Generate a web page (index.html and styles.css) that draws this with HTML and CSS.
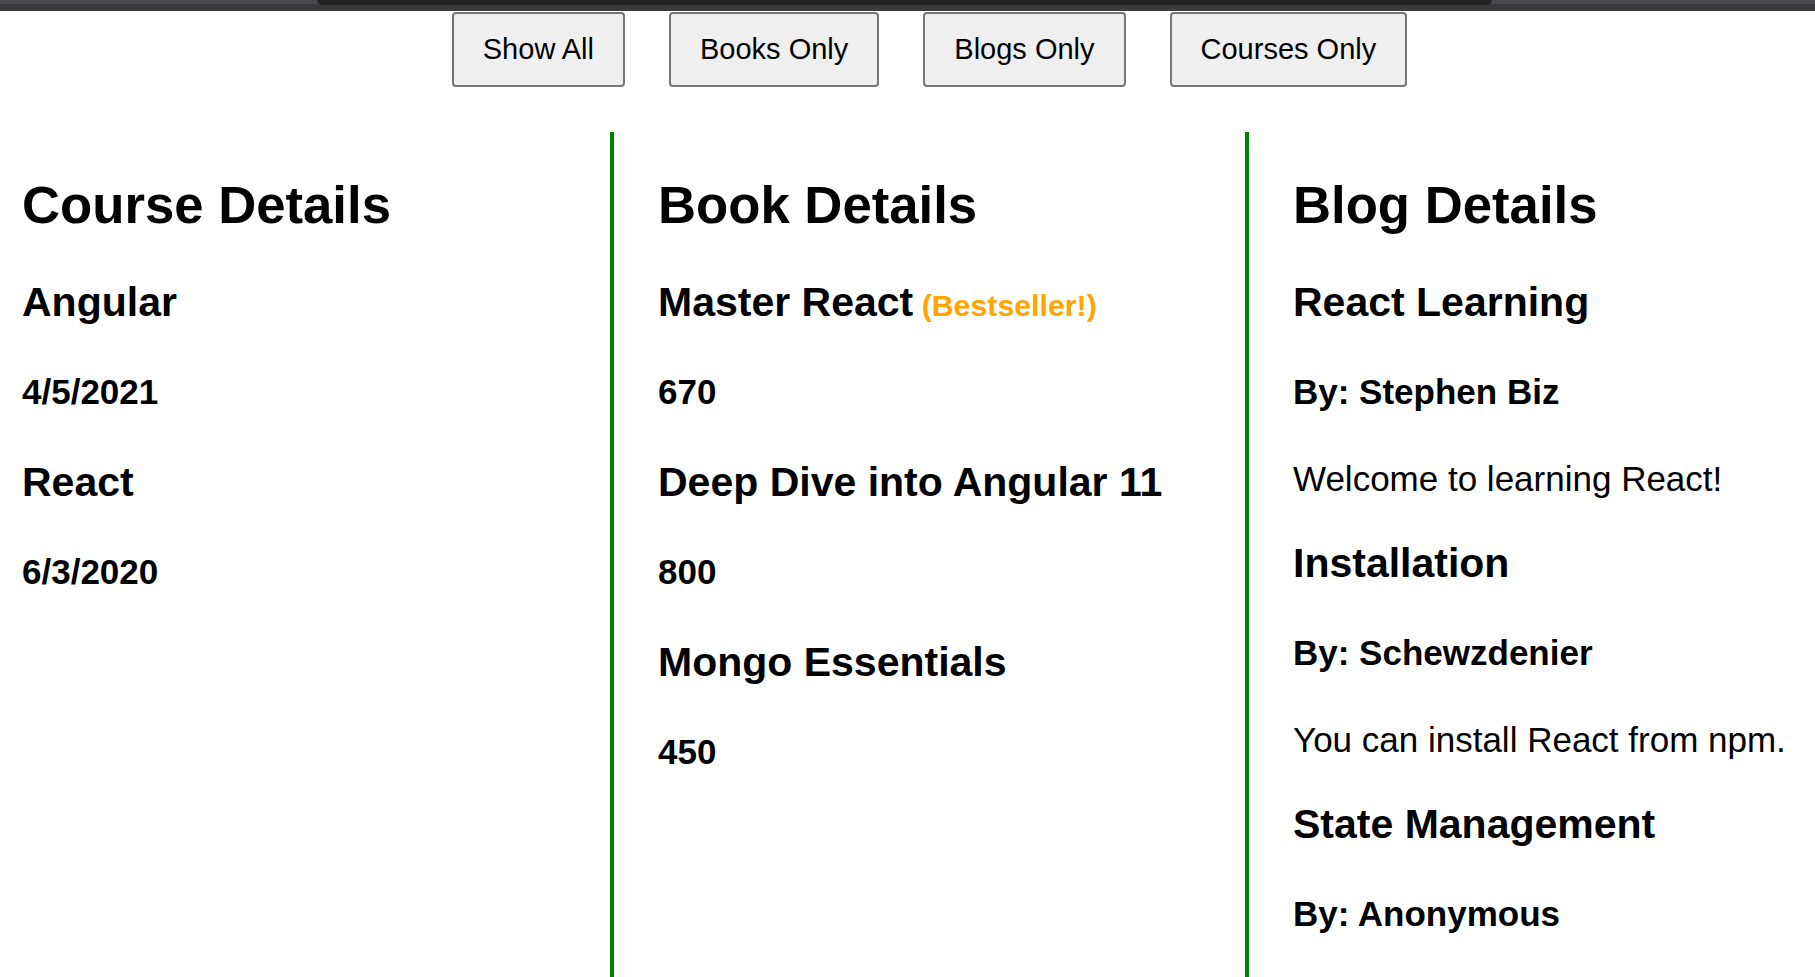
FILE: index.html
```html
<!DOCTYPE html>
<html lang="en">
<head>
<meta charset="utf-8">
<title>Details</title>
<link rel="stylesheet" href="styles.css">
</head>
<body>
<div class="topbar"><div class="topbar-tab"></div></div>
<div class="filters">
  <button class="btn">Show All</button>
  <button class="btn">Books Only</button>
  <button class="btn">Blogs Only</button>
  <button class="btn">Courses Only</button>
</div>
<div class="columns">
  <section class="col col-first">
    <h1>Course Details</h1>
    <h2>Angular</h2>
    <h3>4/5/2021</h3>
    <h2>React</h2>
    <h3>6/3/2020</h3>
  </section>
  <section class="col col-mid">
    <h1>Book Details</h1>
    <h2>Master React<span class="badge"> (Bestseller!)</span></h2>
    <h3>670</h3>
    <h2>Deep Dive into Angular 11</h2>
    <h3>800</h3>
    <h2>Mongo Essentials</h2>
    <h3>450</h3>
  </section>
  <section class="col col-last">
    <h1>Blog Details</h1>
    <h2>React Learning</h2>
    <h3>By: Stephen Biz</h3>
    <p>Welcome to learning React!</p>
    <h2>Installation</h2>
    <h3>By: Schewzdenier</h3>
    <p>You can install React from npm.</p>
    <h2>State Management</h2>
    <h3>By: Anonymous</h3>
  </section>
</div>
</body>
</html>
```
FILE: styles.css
```css
html, body {
  margin: 0;
  padding: 0;
  background: #ffffff;
  overflow: hidden;
}
body {
  font-family: Arial, "Liberation Sans", sans-serif;
  color: #000;
}
.topbar {
  height: 11px;
  background: linear-gradient(#4b4b4f 0, #4b4b4f 4px, #3a3a3d 4px, #3a3a3d 100%);
  padding-left: 317px;
  box-sizing: border-box;
}
.topbar-tab {
  width: 1175px;
  height: 5px;
  background: #242427;
  border-radius: 0 0 6px 6px;
}
.filters {
  display: flex;
  justify-content: center;
  margin-top: 1px;
  margin-bottom: 45px;
}
.btn {
  margin: 0 0 0 44px;
  font-family: Arial, "Liberation Sans", sans-serif;
  font-size: 29px;
  line-height: 33px;
  padding: 19px 29px;
  border: 2px solid #767676;
  border-radius: 4px;
  background: #efefef;
  color: #000;
}
.columns {
  display: grid;
  grid-template-columns: 610px 635px 1fr;
  min-height: 900px;
}
.col {
  box-sizing: border-box;
  padding-top: 43px;
}
.col-first {
  padding-left: 22px;
}
.col-mid, .col-last {
  border-left: 4px solid #008000;
  padding-left: 44px;
}
h1 {
  font-size: 52.7px;
  line-height: 60px;
  font-weight: bold;
  margin: 0 0 44px;
}
h2 {
  font-size: 41px;
  line-height: 46px;
  font-weight: bold;
  margin: 41px 0;
}
h1 + h2 {
  margin-top: 0;
}
h3 {
  font-size: 35px;
  line-height: 40px;
  font-weight: bold;
  margin: 47px 0;
}
p {
  font-size: 35px;
  line-height: 40px;
  margin: 0 0 40px;
}
.badge {
  color: #ffa500;
  font-size: 30.3px;
  line-height: 0;
}
```
